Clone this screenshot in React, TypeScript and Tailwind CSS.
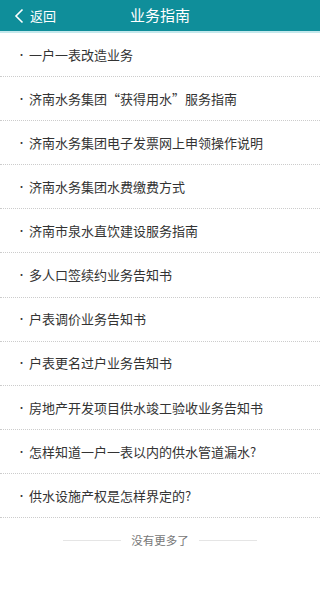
const items = [
  '一户一表改造业务',
  '济南水务集团“获得用水”服务指南',
  '济南水务集团电子发票网上申领操作说明',
  '济南水务集团水费缴费方式',
  '济南市泉水直饮建设服务指南',
  '多人口签续约业务告知书',
  '户表调价业务告知书',
  '户表更名过户业务告知书',
  '房地产开发项目供水竣工验收业务告知书',
  '怎样知道一户一表以内的供水管道漏水?',
  '供水设施产权是怎样界定的?',
];

export default function App() {
  return (
    <div
      className="w-[320px] h-[600px] bg-white"
      style={{ fontFamily: '"Noto Sans CJK SC", "Noto Sans", sans-serif' }}
    >
      <div className="h-[33px] bg-[#0f8e9a] relative flex items-center justify-center border-b-2 border-[#c4e8ec]">
        <div className="absolute left-[14px] top-0 h-full flex items-center gap-[6px] text-white">
          <svg width="10" height="16" viewBox="0 0 10 16" fill="none">
            <path d="M8.5 1.5L2 8l6.5 6.5" stroke="white" strokeWidth="1.6" />
          </svg>
          <span className="text-[13px]">返回</span>
        </div>
        <span className="text-white text-[15px]">业务指南</span>
      </div>
      <ul>
        {items.map((t) => (
          <li
            key={t}
            className="h-[44.1px] flex items-center border-b border-dotted border-[#cccccc] pl-[17px] text-[13px] text-[#333]"
          >
            <span className="w-[12px] text-[9px]">•</span>
            <span>{t}</span>
          </li>
        ))}
      </ul>
      <div className="flex items-center justify-center mt-[14px] gap-[10px]">
        <div className="w-[58px] h-px bg-[#e5e5e5]" />
        <span className="text-[11.5px] text-[#777]">没有更多了</span>
        <div className="w-[58px] h-px bg-[#e5e5e5]" />
      </div>
    </div>
  );
}
